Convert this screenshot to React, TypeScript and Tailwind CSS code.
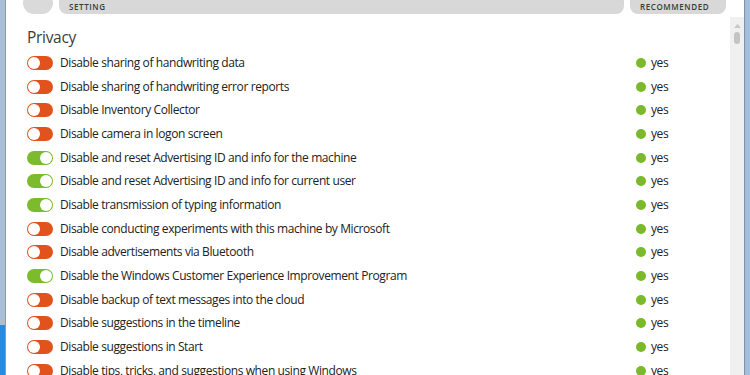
const rows: [string, boolean][] = [
  ["Disable sharing of handwriting data", false],
  ["Disable sharing of handwriting error reports", false],
  ["Disable Inventory Collector", false],
  ["Disable camera in logon screen", false],
  ["Disable and reset Advertising ID and info for the machine", true],
  ["Disable and reset Advertising ID and info for current user", true],
  ["Disable transmission of typing information", true],
  ["Disable conducting experiments with this machine by Microsoft", false],
  ["Disable advertisements via Bluetooth", false],
  ["Disable the Windows Customer Experience Improvement Program", true],
  ["Disable backup of text messages into the cloud", false],
  ["Disable suggestions in the timeline", false],
  ["Disable suggestions in Start", false],
  ["Disable tips, tricks, and suggestions when using Windows", false],
]

const Toggle = ({ on }: { on: boolean }) =>
  on ? (
    <div className="w-[26px] h-[14px] rounded-full bg-[#7cbb2c] flex items-center justify-end pr-[1px]">
      <div className="w-[12px] h-[12px] rounded-full bg-white" />
    </div>
  ) : (
    <div className="w-[26px] h-[14px] rounded-full bg-[#e2521d] flex items-center pl-[1px]">
      <div className="w-[12px] h-[12px] rounded-full bg-white" />
    </div>
  )

export default function App() {
  return (
    <div className="w-[750px] h-[375px] overflow-hidden flex bg-white" style={{ fontFamily: '"Open Sans", "Noto Sans", sans-serif' }}>
      <div className="w-[6px] h-full flex flex-col border-r border-[#8a9bb0]">
        <div className="h-[325px] bg-[#a9bfd6]" />
        <div className="flex-1 bg-[#2a8ae0]" />
      </div>
      <div className="flex-1 flex flex-col min-w-0">
        <div className="h-[14px] flex gap-[6px] pl-[17px] pr-[18px] text-[8px] tracking-[0.6px] font-semibold text-[#3a3a3a]">
          <div className="w-[30px] rounded-full bg-[#dadada] -mt-[8px]" />
          <div className="flex-1 bg-[#d8d8d8] rounded-b-[8px] -mt-[8px] pt-[7px] pl-[10px] flex items-center">SETTING</div>
          <div className="w-[96px] bg-[#d8d8d8] rounded-b-[8px] -mt-[8px] pt-[7px] pl-[10px] flex items-center">RECOMMENDED</div>
        </div>
        <div className="flex-1 flex min-h-0">
          <div className="flex-1 pl-[21px] pt-[13px]">
            <div className="text-[15.5px] tracking-[-0.3px] text-[#3c3c3c] leading-[20px] mb-[4px]">Privacy</div>
            {rows.map(([label, on]) => (
              <div key={label} className="h-[23.7px] flex items-center text-[12px] tracking-[-0.4px] text-[#222]">
                <Toggle on={on} />
                <span className="ml-[7px] flex-1 whitespace-nowrap">{label}</span>
                <div className="w-[94px] flex items-center">
                  <div className="w-[10px] h-[10px] rounded-full bg-[#7ab929]" />
                  <span className="ml-[5px]">yes</span>
                </div>
              </div>
            ))}
          </div>
          <div className="w-[14px] bg-[#f0f0f0] flex flex-col items-center pt-[7px] mt-[3px]">
            <svg width="7" height="4" viewBox="0 0 7 4"><path d="M0 4 L3.5 0 L7 4 Z" fill="#c8c8c8" /></svg>
            <div className="w-[6px] h-[12px] rounded-full bg-[#c4c4c4] mt-[4px]" />
          </div>
        </div>
      </div>
      <div className="w-[6px] h-full bg-[#a4bfdc] border-l border-[#7f93aa]" />
    </div>
  )
}
